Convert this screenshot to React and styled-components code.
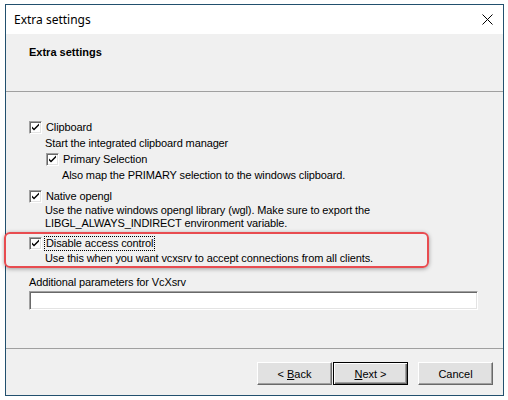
import React from 'react';
import styled, { createGlobalStyle } from 'styled-components';

const GlobalStyle = createGlobalStyle`
  html, body {
    margin: 0;
    padding: 0;
    background: #fff;
  }
  body {
    font-family: Tahoma, "Liberation Sans", Arial, sans-serif;
    font-size: 11px;
    letter-spacing: -0.12px;
    color: #000;
  }
`;

const Screen = styled.div`
  position: relative;
  width: 508px;
  height: 400px;
  padding: 4px 0 0 5px;
  box-sizing: border-box;
`;

const Window = styled.div`
  width: 499px;
  height: 392px;
  box-sizing: border-box;
  border: 1px solid #22506e;
  background: #f0f0f0;
  display: flex;
  flex-direction: column;
`;

const TitleBar = styled.div`
  height: 29px;
  background: #fff;
  display: flex;
  align-items: center;
  justify-content: space-between;
  padding: 0 10px 0 8px;
`;

const TitleText = styled.span`
  font-family: "Segoe UI", "Noto Sans", "Open Sans", sans-serif;
  font-size: 12px;
  letter-spacing: 0;
  color: #000;
`;

const CloseIcon = styled.svg`
  width: 11px;
  height: 11px;
  display: block;
`;

const Header = styled.div`
  height: 58px;
  box-sizing: border-box;
  padding: 12px 0 0 23px;
  border-bottom: 1px solid #a0a0a0;
`;

const HeaderTitle = styled.div`
  font-weight: bold;
  font-size: 11px;
  letter-spacing: 0;
  line-height: 13px;
`;

const Content = styled.div`
  flex: 1;
  padding: 27px 25px 0 23px;
  display: flex;
  flex-direction: column;
  border-bottom: 1px solid #a0a0a0;
`;

const Group = styled.div`
  display: flex;
  flex-direction: column;
  margin-top: ${p => p.$mt || 0}px;
  margin-left: ${p => p.$indent || 0}px;
`;

const CheckRow = styled.label`
  display: flex;
  align-items: center;
  height: 16px;
  line-height: 16px;
  gap: 2px;
`;

const Box = styled.span`
  width: 13px;
  height: 13px;
  box-sizing: border-box;
  background: #fff;
  border-top: 1px solid #a0a0a0;
  border-left: 1px solid #a0a0a0;
  border-right: 1px solid #fff;
  border-bottom: 1px solid #fff;
  box-shadow: inset 1px 1px 0 #696969, inset -1px -1px 0 #e3e3e3;
  display: flex;
  align-items: center;
  justify-content: center;
  flex-shrink: 0;
`;

const LabelText = styled.span`
  padding: 0 1px;
  line-height: 13px;
  border: 1px ${p => (p.$focus ? 'dotted #000' : 'solid transparent')};
`;

const Desc = styled.div`
  margin-left: 16px;
  margin-top: ${p => p.$mt || 0}px;
  line-height: 13px;
  white-space: nowrap;
`;

const Clip = styled.span`
  display: inline-block;
  height: 12px;
  overflow: hidden;
  vertical-align: top;
`;

const FieldLabel = styled.div`
  margin-top: 11px;
  line-height: 13px;
`;

const TextInput = styled.div`
  margin-top: 2px;
  width: 449px;
  height: 19px;
  box-sizing: border-box;
  background: #fff;
  border-top: 1px solid #a0a0a0;
  border-left: 1px solid #a0a0a0;
  border-right: 1px solid #fff;
  border-bottom: 1px solid #fff;
  box-shadow: inset 1px 1px 0 #696969, inset -1px -1px 0 #e3e3e3;
`;

const Footer = styled.div`
  flex: 0 0 46px;
  display: flex;
  justify-content: flex-end;
  align-items: flex-start;
  padding: 13px 10px 0 0;
  box-sizing: border-box;
`;

const Button = styled.button`
  width: 75px;
  height: 23px;
  margin-left: ${p => p.$ml || 0}px;
  box-sizing: border-box;
  padding: 0;
  font-family: Tahoma, "Liberation Sans", Arial, sans-serif;
  font-size: 11px;
  color: #000;
  background: #e1e1e1;
  border: 1px solid;
  border-top-color: ${p => (p.$default ? '#000' : '#fff')};
  border-left-color: ${p => (p.$default ? '#000' : '#fff')};
  border-right-color: ${p => (p.$default ? '#000' : '#696969')};
  border-bottom-color: ${p => (p.$default ? '#000' : '#696969')};
  box-shadow: ${p =>
    p.$default
      ? 'inset 1px 1px 0 #fff, inset -1px -1px 0 #696969, inset -2px -2px 0 #a0a0a0'
      : 'inset -1px -1px 0 #a0a0a0'};
  u { text-decoration: underline; }
`;

const Highlight = styled.div`
  position: absolute;
  left: 4px;
  top: 232px;
  width: 425px;
  height: 36px;
  box-sizing: border-box;
  border: 2px solid #e84c50;
  border-radius: 6px;
  box-shadow: 0 1px 4px rgba(0, 0, 0, 0.35);
  pointer-events: none;
`;

const Check = () => (
  <svg width="9" height="9" viewBox="0 0 9 9">
    <path d="M1 3.5 L1 5.5 L3 7.5 L8 2.5 L8 0.5 L3 5.5 Z" fill="#000" />
  </svg>
);

const CheckBox = ({ label, focus }) => (
  <CheckRow>
    <Box>
      <Check />
    </Box>
    <LabelText $focus={focus}>{label}</LabelText>
  </CheckRow>
);

const App = () => (
  <>
    <GlobalStyle />
    <Screen>
      <Window>
        <TitleBar>
          <TitleText>Extra settings</TitleText>
          <CloseIcon viewBox="0 0 11 11">
            <path d="M0.5 0.5 L10.5 10.5 M10.5 0.5 L0.5 10.5" stroke="#000" strokeWidth="1" />
          </CloseIcon>
        </TitleBar>
        <Header>
          <HeaderTitle>Extra settings</HeaderTitle>
        </Header>
        <Content>
          <Group>
            <CheckBox label="Clipboard" />
            <Desc $mt={2}>Start the integrated clipboard manager</Desc>
          </Group>
          <Group $mt={1} $indent={17}>
            <CheckBox label="Primary Selection" />
            <Desc $mt={2}>Also map the PRIMARY selection to the windows clipboard.</Desc>
          </Group>
          <Group $mt={6}>
            <CheckBox label="Native opengl" />
            <Desc>Use the native windows opengl library (wgl). Make sure to export the</Desc>
            <Desc><Clip>LIBGL_ALWAYS_INDIRECT</Clip> environment variable.</Desc>
          </Group>
          <Group $mt={5}>
            <CheckBox label="Disable access control" focus />
            <Desc $mt={1}>Use this when you want vcxsrv to accept connections from all clients.</Desc>
          </Group>
          <FieldLabel>Additional parameters for VcXsrv</FieldLabel>
          <TextInput />
        </Content>
        <Footer>
          <Button>&lt; <u>B</u>ack</Button>
          <Button $ml={1} $default><u>N</u>ext &gt;</Button>
          <Button $ml={10}>Cancel</Button>
        </Footer>
      </Window>
      <Highlight />
    </Screen>
  </>
);

export default App;
